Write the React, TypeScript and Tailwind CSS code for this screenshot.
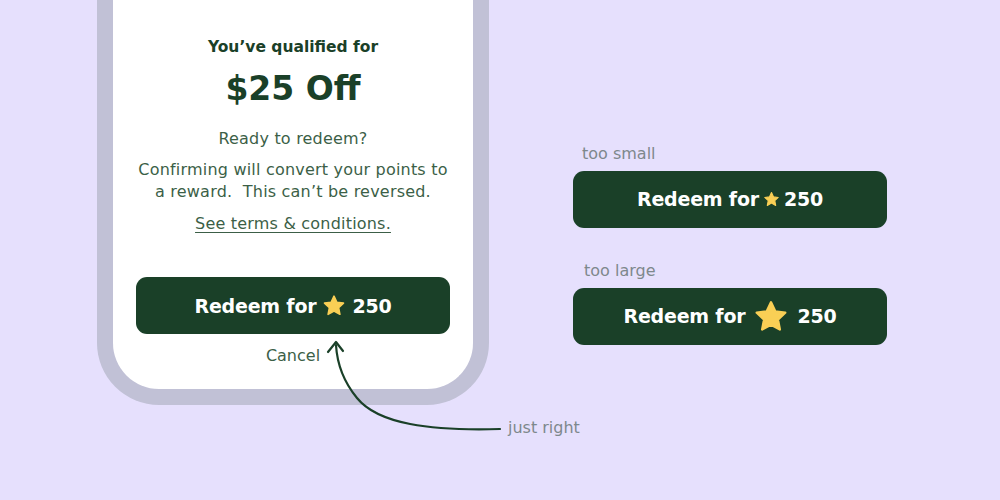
import React from "react";

const font = { fontFamily: '"DejaVu Sans", "Liberation Sans", sans-serif' };

function Star({ size }: { size: number }) {
  return (
    <svg width={size} height={size} viewBox="0 0 24 24" className="inline-block shrink-0">
      <path
        d="M12 2.2l2.9 6.1 6.6.8-4.9 4.6 1.3 6.6L12 17.1l-5.9 3.2 1.3-6.6-4.9-4.6 6.6-.8z"
        fill="#f9cf55"
        stroke="#f9cf55"
        strokeWidth="1.6"
        strokeLinejoin="round"
      />
    </svg>
  );
}

function RedeemButton({ star, gap = "gap-1.5" }: { star: number; gap?: string }) {
  return (
    <div className="w-[314px] h-[57px] rounded-[11px] bg-[#1a4028] flex items-center justify-center">
      <span className={`flex items-center ${gap} text-white font-bold text-[19px] tracking-[-0.2px]`}>
        <span>Redeem for</span>
        <Star size={star} />
        <span>250</span>
      </span>
    </div>
  );
}

export default function App() {
  return (
    <div className="relative w-[1000px] h-[500px] bg-[#e6e0fd] overflow-hidden flex" style={font}>
      {/* phone */}
      <div className="ml-[97px] w-[392px] h-[405px] border-[16px] border-t-0 border-[#c1c1d6] rounded-b-[62px] bg-white flex flex-col items-center text-center">
        <p className="mt-[36px] text-[15.5px] font-bold text-[#1a4028]">You’ve qualified for</p>
        <p className="mt-[8px] text-[33px] leading-[44px] font-extrabold text-[#1a4028]">$25 Off</p>
        <p className="mt-[16px] text-[16px] tracking-[0.2px] text-[#3c5f47]">Ready to redeem?</p>
        <p className="mt-[8px] text-[16px] leading-[22px] tracking-[0.2px] text-[#3c5f47] whitespace-pre">
          {"Confirming will convert your points to\na reward.  This can’t be reversed."}
        </p>
        <p className="mt-[9px] text-[16px] tracking-[0.2px] text-[#3c5f47] underline underline-offset-[3px] decoration-1">
          See terms &amp; conditions.
        </p>
        <div className="mt-[41px]">
          <RedeemButton star={24} />
        </div>
        <p className="mt-[10px] text-[16px] text-[#3c5f47]">Cancel</p>
      </div>

      {/* variants */}
      <div className="ml-[84px] mt-[144px] flex flex-col">
        <p className="ml-[9px] text-[16px] leading-[20px] text-[#7e888c]">too small</p>
        <div className="mt-[7px]">
          <RedeemButton star={17} gap="gap-1" />
        </div>
        <p className="ml-[11px] mt-[33px] text-[16px] leading-[20px] text-[#7e888c]">too large</p>
        <div className="mt-[7px]">
          <RedeemButton star={36} gap="gap-2" />
        </div>
      </div>

      {/* annotation arrow */}
      <svg className="absolute left-0 top-0" width="1000" height="500" viewBox="0 0 1000 500" fill="none">
        <path
          d="M500 429 C 430 431, 378 424, 357 398 C 343 381, 337 362, 336 345"
          stroke="#1a4028"
          strokeWidth="2.2"
          strokeLinecap="round"
        />
        <path d="M328 352 L336 342 L343 351" stroke="#1a4028" strokeWidth="2.2" strokeLinecap="round" strokeLinejoin="round" />
      </svg>
      <p className="absolute left-[508px] top-[418px] text-[16px] leading-[20px] text-[#7e888c]">just right</p>
    </div>
  );
}
